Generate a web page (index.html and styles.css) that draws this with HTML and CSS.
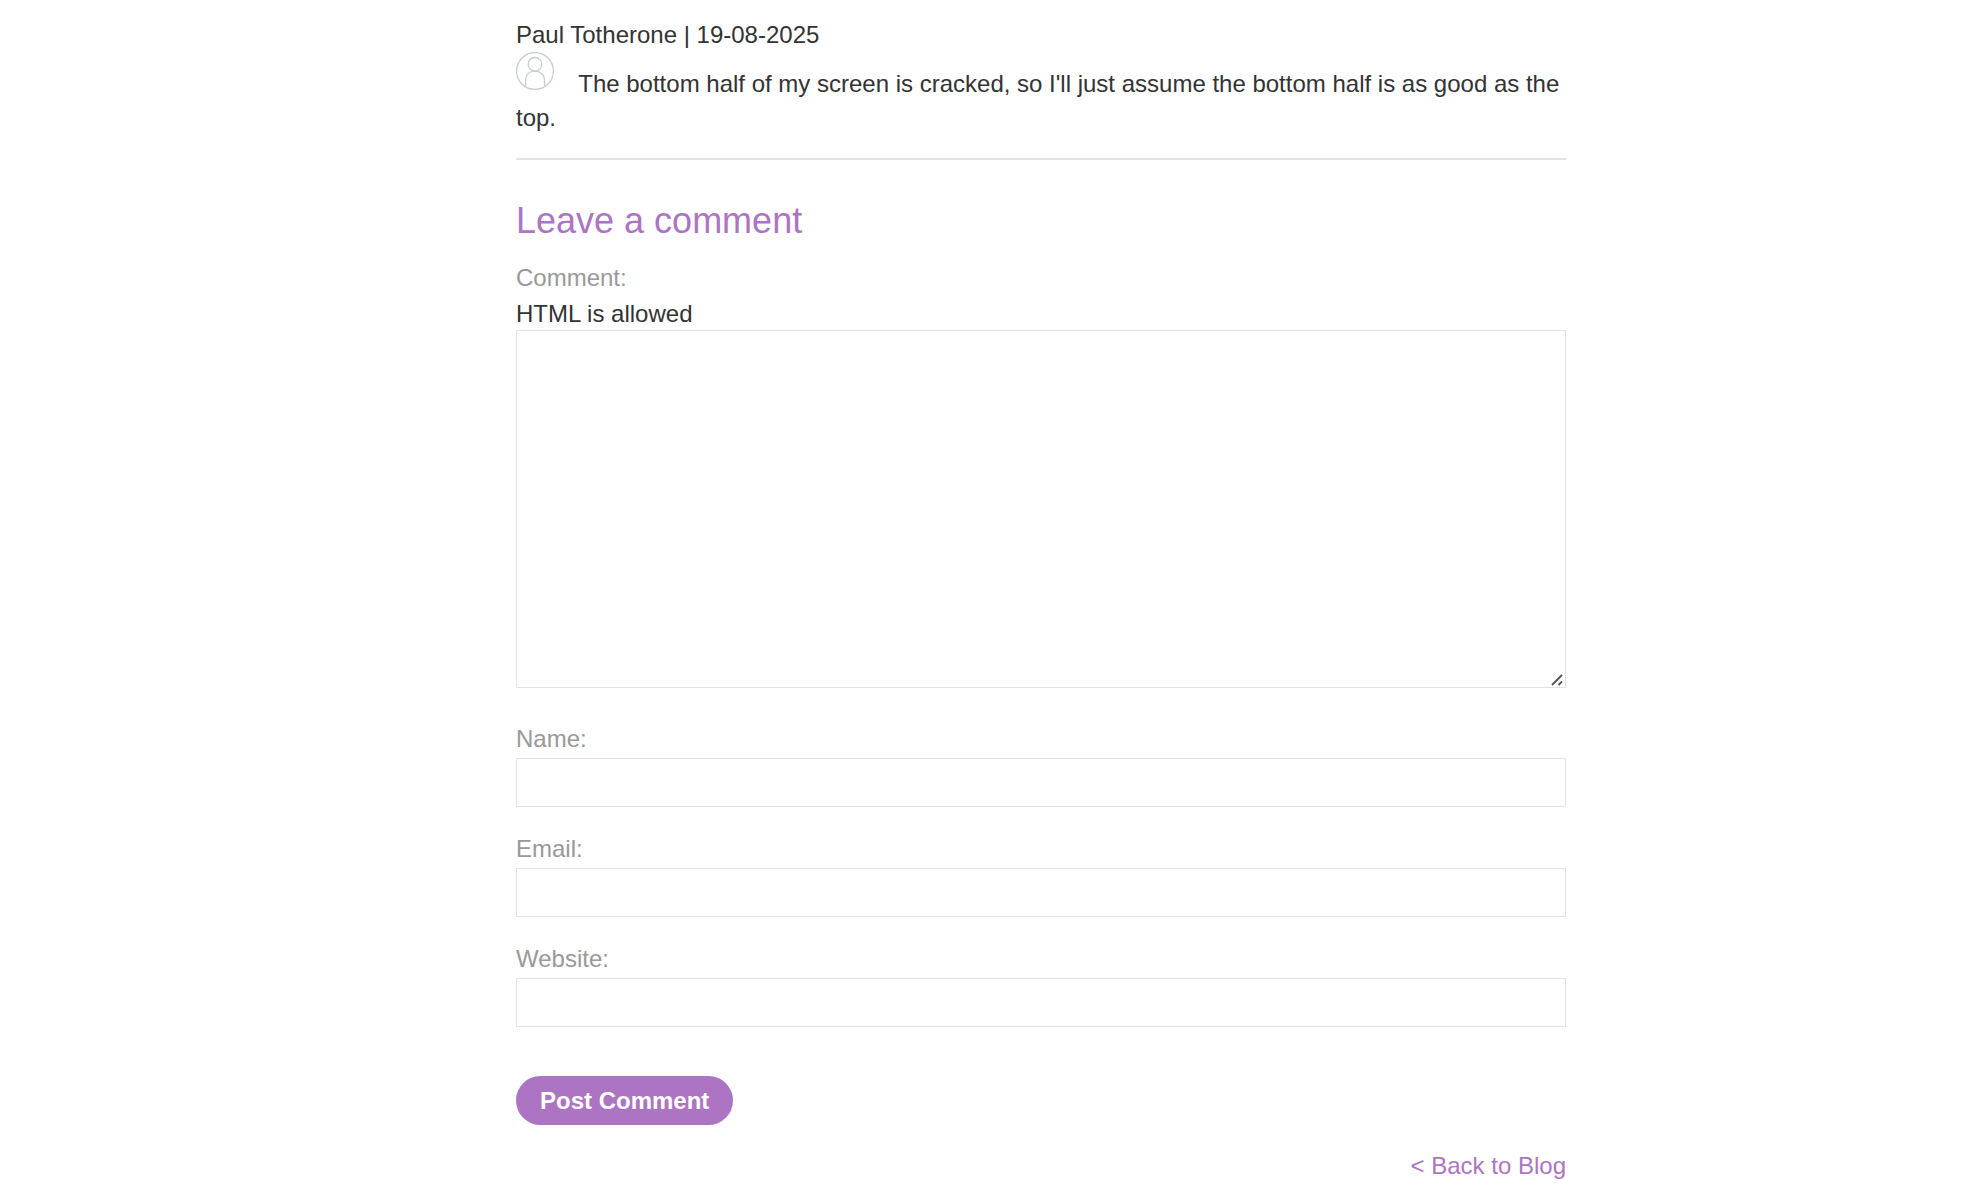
FILE: index.html
```html
<!DOCTYPE html>
<html lang="en">
<head>
    <meta charset="UTF-8">
    <meta name="viewport" content="width=device-width, initial-scale=1.0">
    <title>Blog comments</title>
    <link rel="stylesheet" href="styles.css">
</head>
<body>

    <main class="container">

        <!-- Comments -->
        <article class="comment">
            <div class="comment-meta">Paul Totherone | 19-08-2025</div>
            <div class="comment-body">
                <svg class="avatar" viewBox="0 0 40 40" aria-hidden="true">
                    <circle cx="19" cy="19" r="18.4"/>
                    <circle cx="19" cy="12.3" r="6.8"/>
                    <path d="M9.6 34.8V28.5C9.6 22.5 13.5 19.1 19 19.1S28.5 22.5 28.5 28.5V34.8"/>
                </svg>
                The bottom half of my screen is cracked, so I'll just assume the bottom half is as good as the top.
            </div>
        </article>

        <!-- Comment form -->
        <h2>Leave a comment</h2>
        <form class="comment-form" onsubmit="return false">
            <div class="field">
                <label for="comment">Comment:</label>
                <div class="hint" id="comment-hint">HTML is allowed</div>
                <div class="textarea-wrap">
                    <textarea id="comment" name="comment" aria-describedby="comment-hint"></textarea>
                    <svg class="grip" viewBox="0 0 12 12" aria-hidden="true">
                        <path d="M1 11L11 1M7.5 11L11 7.5"/>
                    </svg>
                </div>
            </div>
            <div class="field">
                <label for="name">Name:</label>
                <input type="text" id="name" name="name">
            </div>
            <div class="field">
                <label for="email">Email:</label>
                <input type="email" id="email" name="email">
            </div>
            <div class="field">
                <label for="website">Website:</label>
                <input type="text" id="website" name="website">
            </div>
            <button class="btn" type="submit">Post Comment</button>
        </form>

        <div class="back">
            <a href="#">&lt; Back to Blog</a>
        </div>

    </main>

</body>
</html>
```

FILE: styles.css
```css
* {
    box-sizing: border-box;
}

body {
    margin: 0;
    background-color: #fff;
    color: #333;
    font-family: "Liberation Sans", Arial, sans-serif;
    font-size: 24px;
    line-height: 34px;
}

.container {
    max-width: 1152px;
    margin: 0 auto;
    padding: 18px 0 0 102px;
}

/* Comments */
.comment {
    padding-bottom: 23px;
    border-bottom: 2px solid #e3e3e3;
}

.avatar {
    width: 40px;
    height: 40px;
    margin-right: 16px;
    fill: none;
    stroke: #c8cecd;
    stroke-width: 1.3;
}

h2 {
    margin: 39px 0 18px;
    color: #ad74c3;
    font-size: 36px;
    font-weight: normal;
    line-height: 44px;
}

/* Comment form */
.field {
    margin-bottom: 25px;
}

label {
    display: block;
    margin-bottom: 2px;
    color: #999;
}

.hint {
    height: 33px;
}

input,
textarea {
    display: block;
    width: 100%;
    border: 1px solid #e3e3e3;
    border-radius: 0;
    background-color: #fff;
    color: #333;
    font: inherit;
}

input {
    height: 49px;
    padding: 0 12px;
}

.textarea-wrap {
    position: relative;
    margin-bottom: 34px;
}

textarea {
    height: 358px;
    padding: 12px;
    resize: vertical;
}

textarea::-webkit-resizer {
    background: transparent;
}

/* Resize handle in the corner of the textarea */
.grip {
    position: absolute;
    right: 3px;
    bottom: 2px;
    width: 12px;
    height: 12px;
    fill: none;
    stroke: #555;
    stroke-width: 1.8;
    pointer-events: none;
}

.btn {
    display: block;
    height: 49px;
    margin-top: 49px;
    padding: 0 24px;
    border: 0;
    border-radius: 25px;
    background-color: #ad74c3;
    color: #fff;
    font: inherit;
    font-weight: bold;
    cursor: pointer;
}

.back {
    margin: 24px 0 0;
    text-align: right;
}

.back a {
    color: #ad74c3;
    text-decoration: none;
}
```
